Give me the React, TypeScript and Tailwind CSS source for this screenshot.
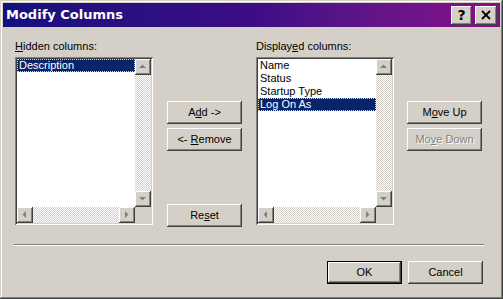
import type { ReactNode } from 'react';

const raised =
  'shadow-[inset_-1px_-1px_#404040,inset_1px_1px_#ffffff,inset_-2px_-2px_#808080,inset_2px_2px_#d4d0c8]';
const sunken =
  'shadow-[inset_1px_1px_#808080,inset_-1px_-1px_#ffffff,inset_2px_2px_#404040,inset_-2px_-2px_#d4d0c8]';
const track =
  'bg-[repeating-conic-gradient(#d4d0c8_0_25%,#ffffff_0_50%)] bg-size-[2px_2px]';

function Arrow({ dir }: { dir: 'up' | 'down' | 'left' | 'right' }) {
  const pts = {
    up: '4,9 11,9 7.5,5.5',
    down: '4,6 11,6 7.5,9.5',
    left: '9,4 9,11 5.5,7.5',
    right: '6,4 6,11 9.5,7.5',
  }[dir];
  return (
    <div className={`w-[16px] h-[16px] bg-[#d4d0c8] ${raised}`}>
      <svg width="16" height="16" viewBox="0 0 16 16">
        <polygon points={pts} fill="#808080" />
      </svg>
    </div>
  );
}

function ListBox({ items, selected }: { items: string[]; selected: number }) {
  return (
    <div className={`w-[138px] h-[168px] bg-white p-[2px] ${sunken}`}>
      <div className="grid grid-cols-[1fr_16px] grid-rows-[1fr_16px] h-full">
        <div className="overflow-hidden">
          {items.map((it, i) => (
            <div
              key={it}
              className={`h-[13px] leading-[13px] pl-[2px] ${
                i === selected
                  ? 'bg-[#0a246a] text-white outline-1 outline-dotted outline-[#e0e0a0] -outline-offset-1'
                  : 'text-black'
              }`}
            >
              {it}
            </div>
          ))}
        </div>
        <div className={`flex flex-col justify-between ${track}`}>
          <Arrow dir="up" />
          <Arrow dir="down" />
        </div>
        <div className={`flex justify-between ${track}`}>
          <Arrow dir="left" />
          <Arrow dir="right" />
        </div>
        <div className="bg-[#d4d0c8]" />
      </div>
    </div>
  );
}

function Btn({
  children,
  className = '',
  disabled = false,
  isDefault = false,
}: {
  children: ReactNode;
  className?: string;
  disabled?: boolean;
  isDefault?: boolean;
}) {
  const bevel = isDefault
    ? 'shadow-[inset_0_0_0_1px_#000000,inset_-2px_-2px_#404040,inset_2px_2px_#ffffff,inset_-3px_-3px_#808080]'
    : raised;
  return (
    <div
      className={`w-[75px] h-[23px] flex items-center justify-center bg-[#d4d0c8] ${bevel} ${
        disabled ? 'text-[#808080] [text-shadow:1px_1px_#ffffff]' : 'text-black'
      } ${className}`}
    >
      <span>{children}</span>
    </div>
  );
}

export default function App() {
  return (
    <div
      className="w-[503px] h-[299px] bg-[#d4d0c8] p-[3px] flex flex-col text-[11px] shadow-[inset_-1px_-1px_#404040,inset_1px_1px_#d4d0c8,inset_-2px_-2px_#808080,inset_2px_2px_#ffffff]"
      style={{ fontFamily: '"Liberation Sans", Arial, sans-serif' }}
    >
      <div className="h-[24px] flex items-center pl-[3px] pr-[3px] bg-linear-to-r from-[#14107c] via-[#3c0c86] to-[#8a0a8a]">
        <span
          className="text-white font-bold text-[13px]"
          style={{ fontFamily: '"DejaVu Sans", Verdana, sans-serif' }}
        >
          Modify Columns
        </span>
        <div className="ml-auto flex gap-[3px]">
          <div className={`w-[21px] h-[19px] bg-[#d4d0c8] flex items-center justify-center ${raised}`}>
            <span className="font-bold text-[14px] leading-none text-black" style={{ fontFamily: '"DejaVu Sans", sans-serif' }}>
              ?
            </span>
          </div>
          <div className={`w-[22px] h-[19px] bg-[#d4d0c8] flex items-center justify-center ${raised}`}>
            <svg width="12" height="12" viewBox="0 0 12 12">
              <path d="M2 2 L10 10 M10 2 L2 10" stroke="#000" strokeWidth="1.8" />
            </svg>
          </div>
        </div>
      </div>

      <div className="flex-1 pl-[12px] pt-[13px]">
        <div className="flex">
          <div className="w-[138px]">
            <div className="h-[13px] leading-[13px] mb-[4px]">
              <u>H</u>idden columns:
            </div>
            <ListBox items={['Description']} selected={0} />
          </div>
          <div className="ml-[14px] w-[75px] pt-[61px]">
            <Btn>
              A<u>d</u>d -&gt;
            </Btn>
            <Btn className="mt-[4px]">
              &lt;- <u>R</u>emove
            </Btn>
            <Btn className="mt-[53px]">
              Re<u>s</u>et
            </Btn>
          </div>
          <div className="ml-[14px] w-[138px]">
            <div className="h-[13px] leading-[13px] mb-[4px]">
              Display<u>e</u>d columns:
            </div>
            <ListBox items={['Name', 'Status', 'Startup Type', 'Log On As']} selected={3} />
          </div>
          <div className="ml-[13px] w-[75px] pt-[61px]">
            <Btn>
              M<u>o</u>ve Up
            </Btn>
            <Btn className="mt-[4px]" disabled>
              Mo<u>v</u>e Down
            </Btn>
          </div>
        </div>

        <div className="mt-[17px] -ml-[1px] w-[470px] h-[2px] border-t border-t-[#808080] border-b border-b-white" />

        <div className="flex pl-[312px] pt-[15px] gap-[6px]">
          <Btn isDefault>OK</Btn>
          <Btn>Cancel</Btn>
        </div>
      </div>
    </div>
  );
}
